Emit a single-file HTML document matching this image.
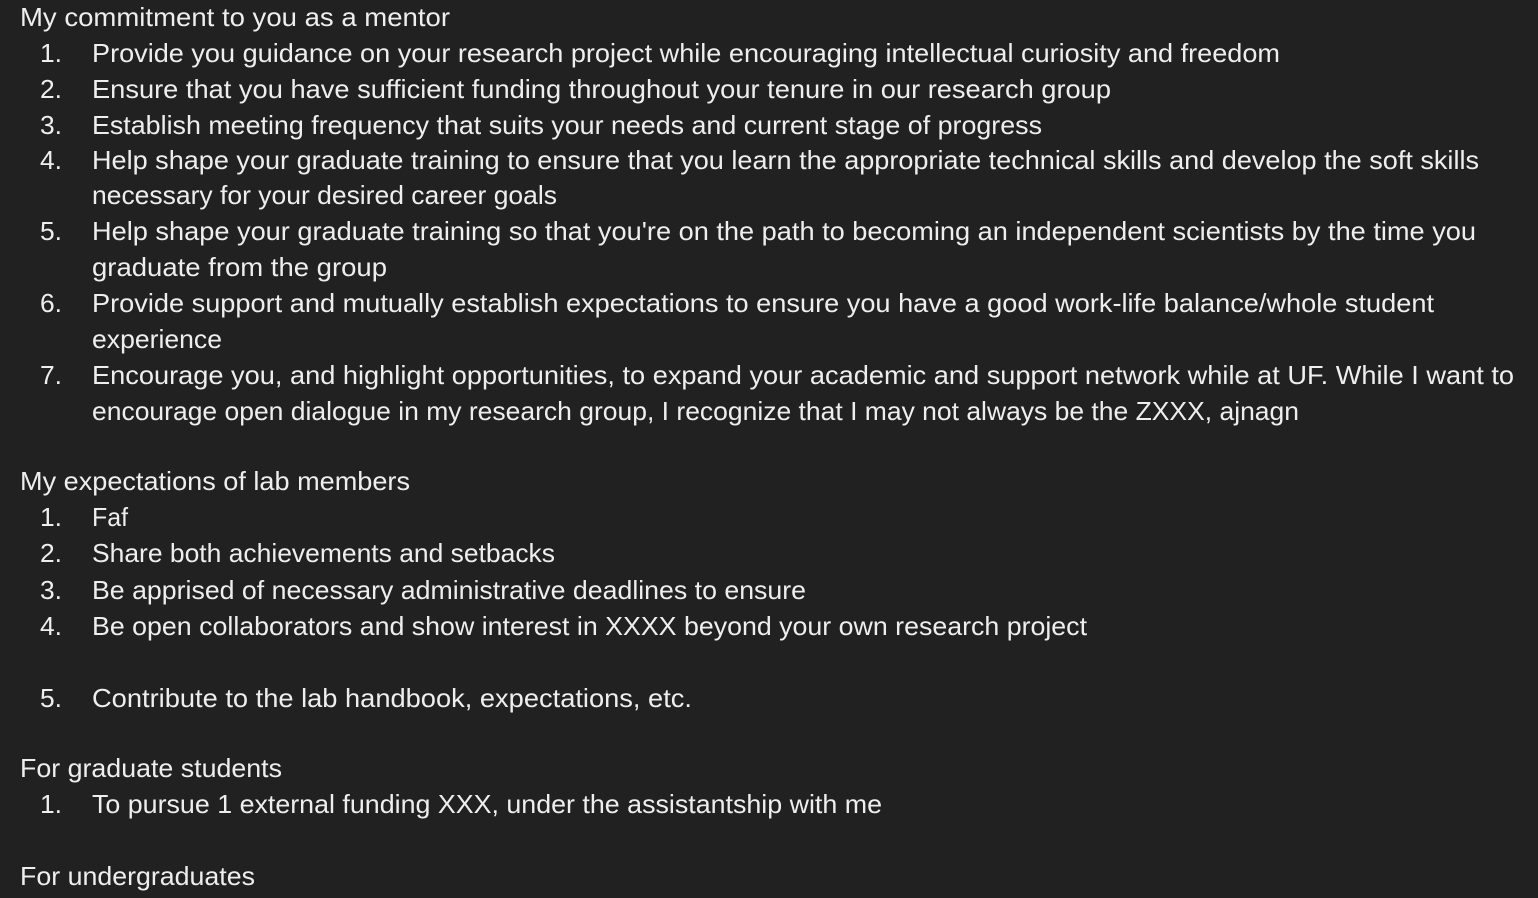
<!DOCTYPE html>
<html><head><meta charset="utf-8"><style>
html,body{margin:0;padding:0;background:#212121;width:1538px;height:898px;overflow:hidden}
.l{position:absolute;white-space:nowrap;font-family:"Liberation Sans",sans-serif;font-size:26px;line-height:36px;color:#eeeeee;transform-origin:0 50%}
</style></head><body>
<div id="c"></div>
<script>
var L=[
[20,17,"My commitment to you as a mentor",450],
[40,53,"1.",62],[92,53,"Provide you guidance on your research project while encouraging intellectual curiosity and freedom",1280],
[40,89,"2.",62],[92,89,"Ensure that you have sufficient funding throughout your tenure in our research group",1111],
[40,125,"3.",62],[92,125,"Establish meeting frequency that suits your needs and current stage of progress",1042],
[40,160,"4.",62],[92,160,"Help shape your graduate training to ensure that you learn the appropriate technical skills and develop the soft skills",1479],
[92,195,"necessary for your desired career goals",557],
[40,231,"5.",62],[92,231,"Help shape your graduate training so that you're on the path to becoming an independent scientists by the time you",1476],
[92,267,"graduate from the group",387],
[40,303,"6.",62],[92,303,"Provide support and mutually establish expectations to ensure you have a good work-life balance/whole student",1434],
[92,339,"experience",222],
[40,375,"7.",62],[92,375,"Encourage you, and highlight opportunities, to expand your academic and support network while at UF. While I want to",1514],
[92,411,"encourage open dialogue in my research group, I recognize that I may not always be the ZXXX, ajnagn",1299],
[20,481,"My expectations of lab members",410],
[40,517,"1.",62],[92,517,"Faf",128],
[40,553,"2.",62],[92,553,"Share both achievements and setbacks",555],
[40,590,"3.",62],[92,590,"Be apprised of necessary administrative deadlines to ensure",806],
[40,626,"4.",62],[92,626,"Be open collaborators and show interest in XXXX beyond your own research project",1087],
[40,698,"5.",62],[92,698,"Contribute to the lab handbook, expectations, etc.",692],
[20,768,"For graduate students",282],
[40,804,"1.",62],[92,804,"To pursue 1 external funding XXX, under the assistantship with me",882],
[20,876,"For undergraduates",255]
];
var c=document.getElementById('c');
L.forEach(function(a){var d=document.createElement('div');d.className='l';d.style.left=a[0]+'px';d.style.top=(a[1]-18)+'px';d.textContent=a[2];c.appendChild(d);
var w=d.getBoundingClientRect().width;var t=a[3]-a[0];if(w>0)d.style.transform='scaleX('+(t/w)+')';});
</script>
</body></html>
